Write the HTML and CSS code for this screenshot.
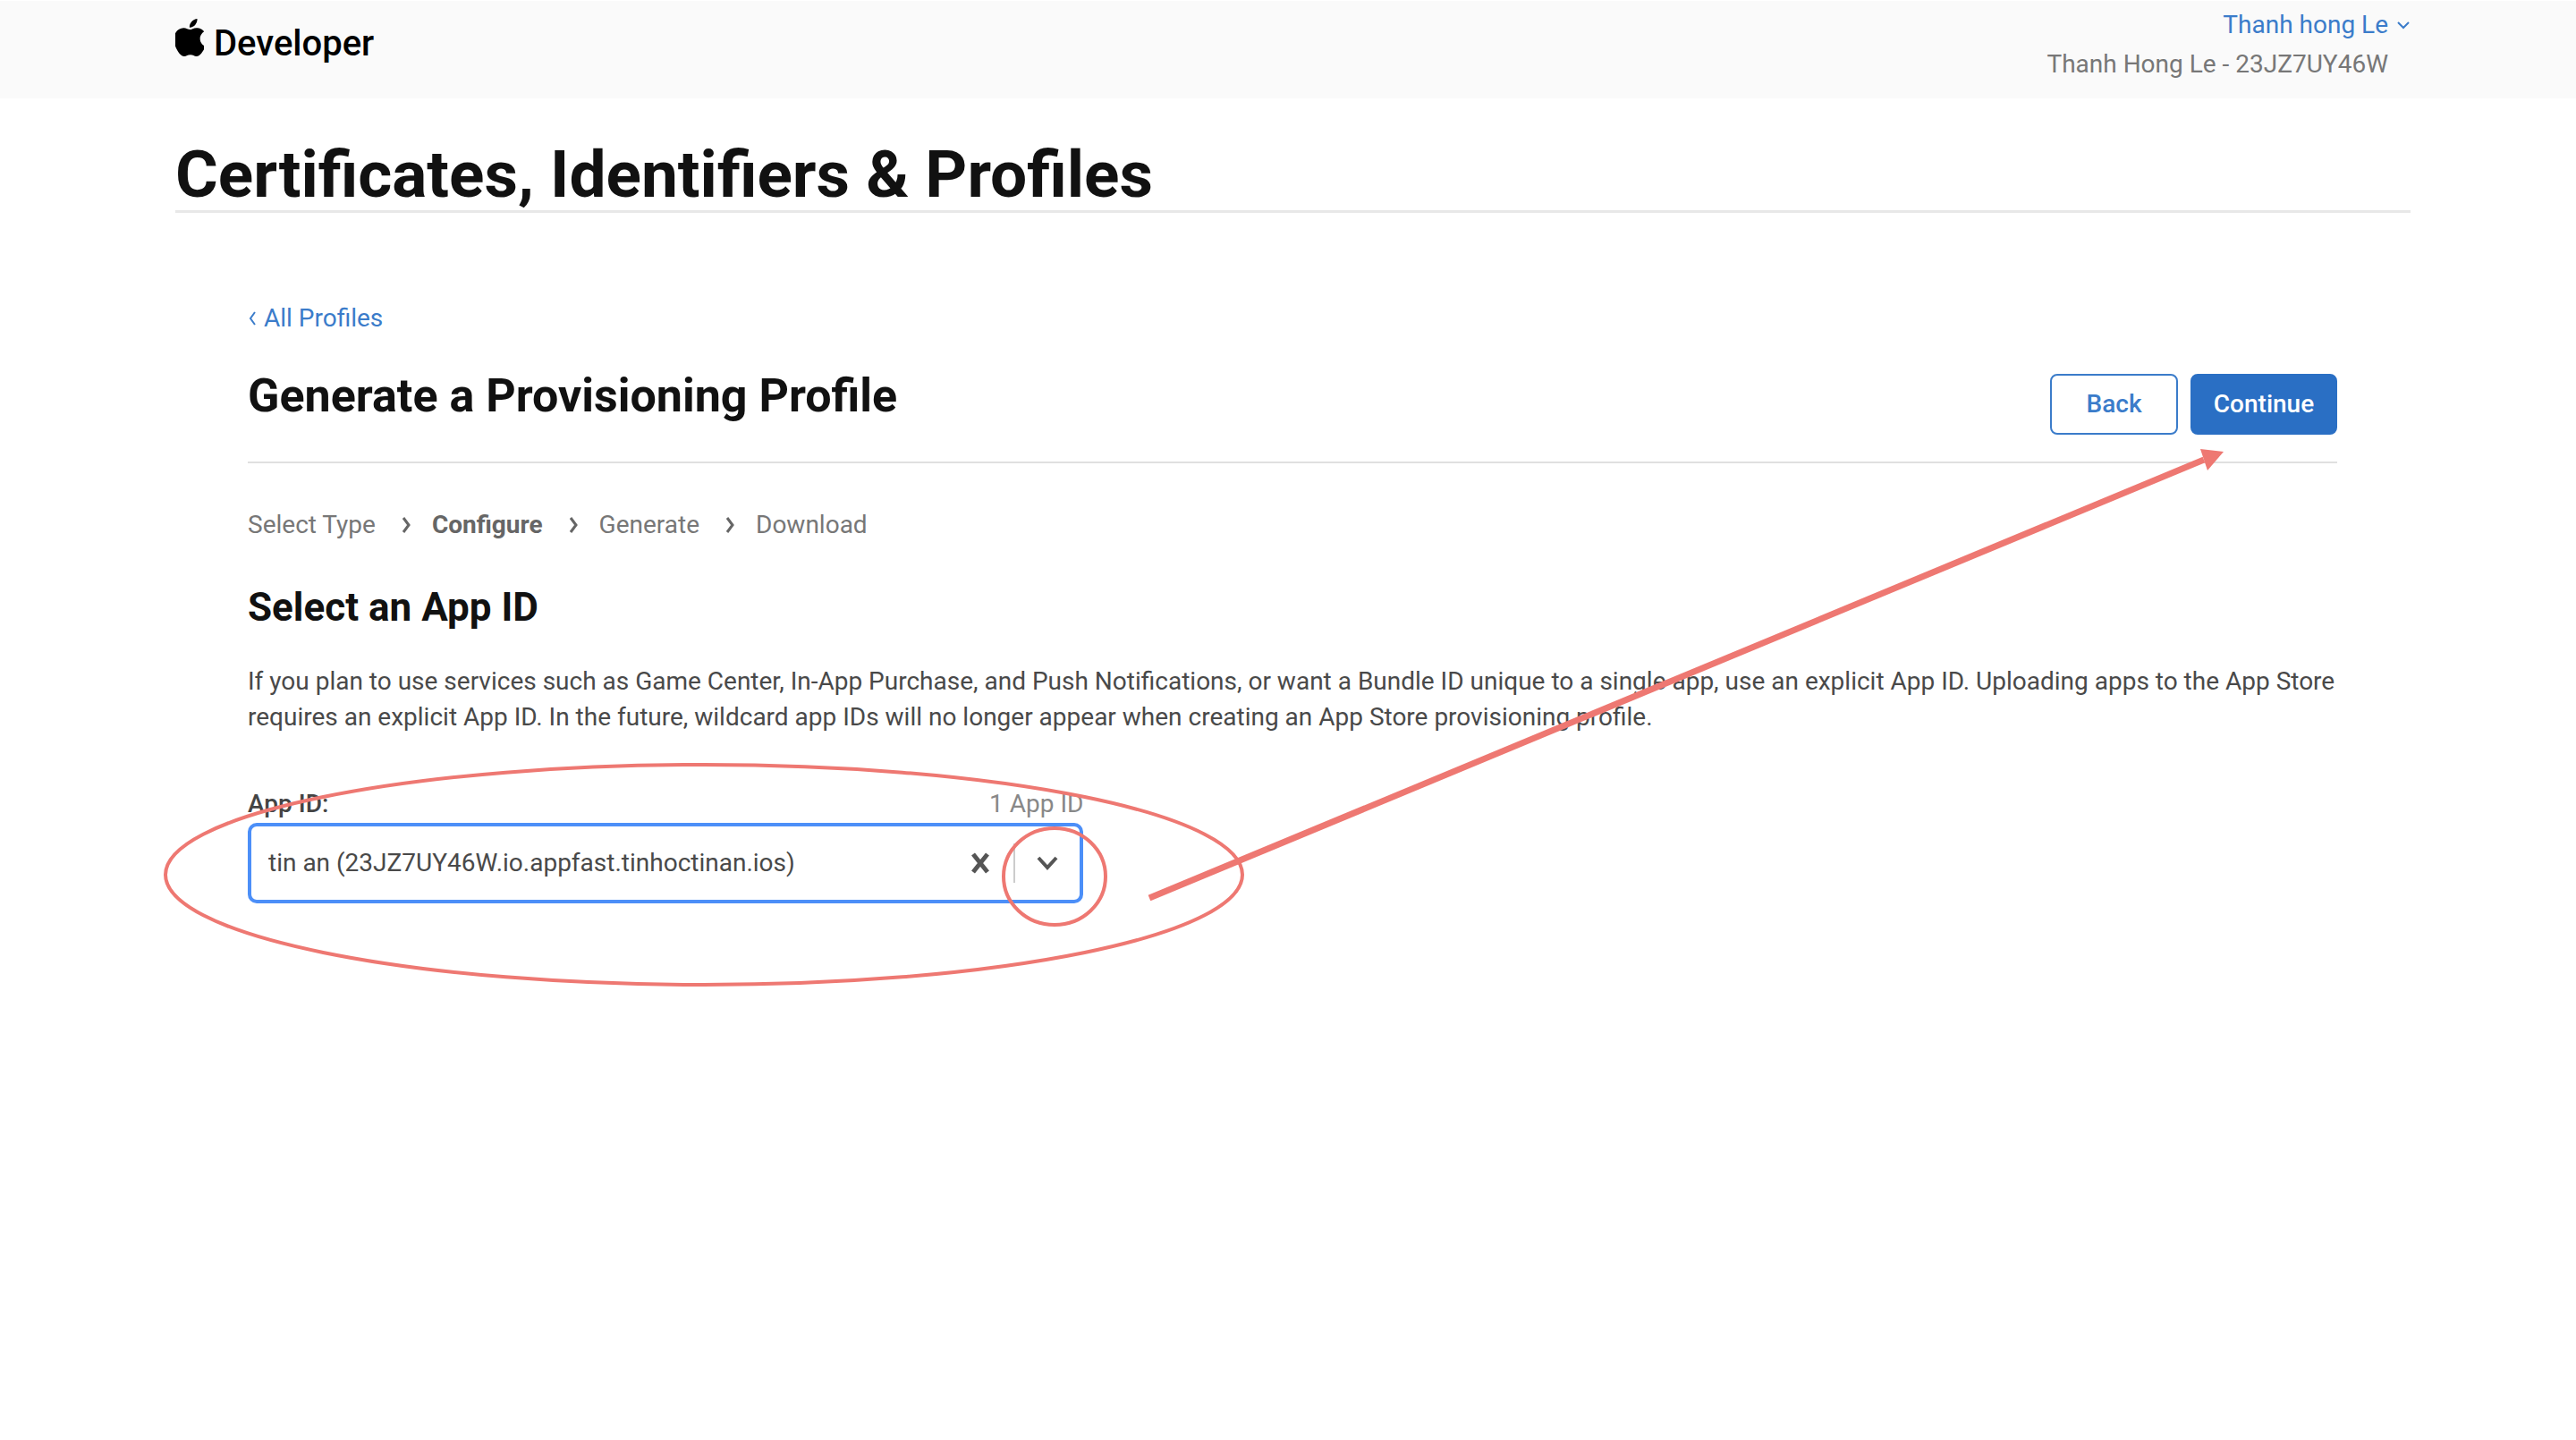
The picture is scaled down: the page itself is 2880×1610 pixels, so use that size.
FILE: index.html
```
<!DOCTYPE html>
<html lang="en">
<head>
<meta charset="utf-8">
<title>Certificates, Identifiers &amp; Profiles - Apple Developer</title>
<link rel="stylesheet" href="styles.css">
</head>
<body>
<header class="topbar">
  <a class="brand" href="#">
    <svg class="brand-logo" viewBox="3 0 18 24" preserveAspectRatio="none" aria-hidden="true"><path d="M12.152 6.896c-.948 0-2.415-1.078-3.96-1.04-2.04.027-3.91 1.183-4.961 3.014-2.117 3.675-.546 9.103 1.519 12.09 1.013 1.454 2.208 3.09 3.792 3.039 1.52-.065 2.09-.987 3.935-.987 1.831 0 2.35.987 3.96.948 1.637-.026 2.676-1.48 3.676-2.948 1.156-1.688 1.636-3.325 1.662-3.415-.039-.013-3.182-1.221-3.22-4.857-.026-3.04 2.48-4.494 2.597-4.559-1.429-2.09-3.623-2.324-4.39-2.376-2-.156-3.675 1.09-4.61 1.09zM15.53 3.83c.843-1.012 1.4-2.427 1.245-3.83-1.207.052-2.662.805-3.532 1.818-.78.896-1.454 2.338-1.273 3.714 1.338.104 2.715-.688 3.559-1.701"/></svg>
    <span>Developer</span>
  </a>
  <div class="account">
    <a class="account-name" href="#">Thanh hong Le
      <svg class="account-caret" viewBox="0 0 14 9" aria-hidden="true"><path d="M1 1l6 6 6-6"/></svg>
    </a>
    <span class="account-team">Thanh Hong Le - 23JZ7UY46W</span>
  </div>
</header>

<main class="page">
  <h1 class="page-title">Certificates, Identifiers &amp; Profiles</h1>
  <div class="content">
    <a class="back-link" href="#"><svg class="back-caret" viewBox="0 0 10 16" aria-hidden="true"><path d="M8 1L3 8l5 7"/></svg>All Profiles</a>

    <div class="section-head">
      <h2 class="section-title">Generate a Provisioning Profile</h2>
      <div class="actions">
        <button class="btn" type="button">Back</button>
        <button class="btn btn-primary" type="button">Continue</button>
      </div>
    </div>

    <ol class="steps">
      <li>Select Type</li>
      <li class="current"><svg class="step-caret" viewBox="0 0 10 18" aria-hidden="true"><path d="M2 1l6 8-6 8"/></svg>Configure</li>
      <li><svg class="step-caret" viewBox="0 0 10 18" aria-hidden="true"><path d="M2 1l6 8-6 8"/></svg>Generate</li>
      <li><svg class="step-caret" viewBox="0 0 10 18" aria-hidden="true"><path d="M2 1l6 8-6 8"/></svg>Download</li>
    </ol>

    <h3 class="form-title">Select an App ID</h3>
    <p class="intro">If you plan to use services such as Game Center, In-App Purchase, and Push Notifications, or want a Bundle ID unique to a single app, use an explicit App ID. Uploading apps to the App Store requires an explicit App ID. In the future, wildcard app IDs will no longer appear when creating an App Store provisioning profile.</p>

    <div class="field">
      <div class="field-head">
        <label class="field-label" for="app-id">App ID:</label>
        <span class="field-count">1 App ID</span>
      </div>
      <div class="picker">
        <select class="picker-value" id="app-id">
          <option>tin an (23JZ7UY46W.io.appfast.tinhoctinan.ios)</option>
        </select>
        <button class="picker-clear" type="button" aria-label="Clear"><svg viewBox="0 0 20 24" aria-hidden="true"><path d="M2 2l16 20M18 2L2 22"/></svg></button>
        <span class="picker-caret"><svg viewBox="0 0 24 16" aria-hidden="true"><path d="M2 2l10 11L22 2"/></svg></span>
      </div>
    </div>
  </div>

  <svg class="annotations" viewBox="0 0 2880 1610" aria-hidden="true">
    <ellipse cx="787" cy="978" rx="602" ry="123"/>
    <ellipse cx="1179" cy="980" rx="57" ry="54"/>
    <path class="arrow-line" d="M1285 1004L2464 514"/>
    <path class="arrow-head" d="M2486 505L2460 502L2468 526Z"/>
  </svg>
</main>
</body>
</html>
```
FILE: styles.css
```
* {
  box-sizing: border-box;
}

body {
  position: relative;
  margin: 0;
  background: #fff;
  color: #494949;
  font: 400 28px/40px Roboto, "Liberation Sans", sans-serif;
}

a {
  color: #3b7cca;
  text-decoration: none;
}

h1, h2, h3, p, ol {
  margin: 0;
  padding: 0;
}

h1, h2, h3 {
  color: #111;
  font-weight: 700;
}

button, select {
  font: inherit;
}

svg {
  display: block;
  fill: none;
  stroke: currentColor;
}

.topbar {
  display: flex;
  justify-content: space-between;
  align-items: flex-start;
  padding: 5px 186px 16px 196px;
  border-top: 1px solid #fff;
  background: #fafafa;
}

.brand {
  display: flex;
  align-items: flex-end;
  gap: 11px;
  padding-top: 15px;
  color: #000;
  font-size: 40px;
  font-weight: 500;
  line-height: 56px;
}

.brand-logo {
  width: 32px;
  height: 42px;
  margin-bottom: 14px;
  fill: currentColor;
  stroke: none;
}

.account {
  display: flex;
  flex-direction: column;
  align-items: flex-end;
  line-height: 44px;
}

.account-name {
  display: flex;
  align-items: center;
  gap: 10px;
}

.account-caret {
  width: 14px;
  height: 9px;
  stroke-width: 2;
}

.account-team {
  padding-right: 24px;
  color: #777;
}

.page {
  padding: 47px 185px 200px 196px;
}

.page-title {
  padding-bottom: 2px;
  border-bottom: 3px solid #e8e8e8;
  font-size: 73px;
  line-height: 76px;
}

.content {
  padding: 98px 82px 0 81px;
}

.back-link {
  display: flex;
  align-items: center;
  gap: 8px;
  width: max-content;
}

.back-caret {
  width: 10px;
  height: 16px;
  stroke-width: 2;
}

.section-head {
  display: flex;
  justify-content: space-between;
  align-items: flex-start;
  margin-top: 42px;
  padding-bottom: 30px;
  border-bottom: 2px solid #e0e0e0;
}

.section-title {
  font-size: 52px;
  line-height: 50px;
}

.actions {
  display: flex;
  gap: 14px;
}

.btn {
  min-width: 143px;
  height: 68px;
  padding: 0 22px;
  border: 2px solid #3b7cca;
  border-radius: 8px;
  background: #fff;
  color: #3b7cca;
  font-weight: 500;
}

.btn-primary {
  min-width: 164px;
  border-color: #2a6fc4;
  background: #2a6fc4;
  color: #fff;
}

.steps {
  display: flex;
  gap: 29px;
  margin-top: 49px;
  color: #777;
  list-style: none;
}

.steps li {
  display: flex;
  align-items: center;
  gap: 24px;
}

.steps .current {
  color: #666;
  font-weight: 700;
}

.step-caret {
  width: 10px;
  height: 18px;
  color: #666;
  stroke-width: 3;
}

.form-title {
  margin-top: 44px;
  font-size: 44px;
  line-height: 56px;
}

.intro {
  margin-top: 35px;
}

.field {
  width: 40%;
  margin-top: 56px;
}

.field-head {
  display: flex;
  justify-content: space-between;
  align-items: center;
  height: 42px;
}

.field-label {
  color: #444;
  font-weight: 500;
}

.field-count {
  color: #888;
}

.picker {
  display: flex;
  align-items: center;
  height: 90px;
  border: 4px solid #4c8ff8;
  border-radius: 10px;
}

.picker-value {
  flex: 1;
  min-width: 0;
  height: 100%;
  padding: 0 0 0 19px;
  border: 0;
  outline: 0;
  background: none;
  color: #494949;
  appearance: none;
}

.picker-clear {
  padding: 0 27px;
  border: 0;
  background: none;
  color: #555;
}

.picker-clear svg {
  width: 20px;
  height: 24px;
  stroke-width: 5;
}

.picker-caret {
  display: flex;
  align-items: center;
  height: 44px;
  padding: 0 24px;
  border-left: 2px solid #ccc;
  color: #555;
  pointer-events: none;
}

.picker-caret svg {
  width: 24px;
  height: 16px;
  stroke-width: 4;
}

.annotations {
  position: absolute;
  top: 0;
  left: 0;
  width: 100%;
  color: #ee7872;
  stroke-width: 4;
  pointer-events: none;
}

.arrow-line {
  stroke-width: 7;
}

.arrow-head {
  fill: currentColor;
  stroke: none;
}
```
